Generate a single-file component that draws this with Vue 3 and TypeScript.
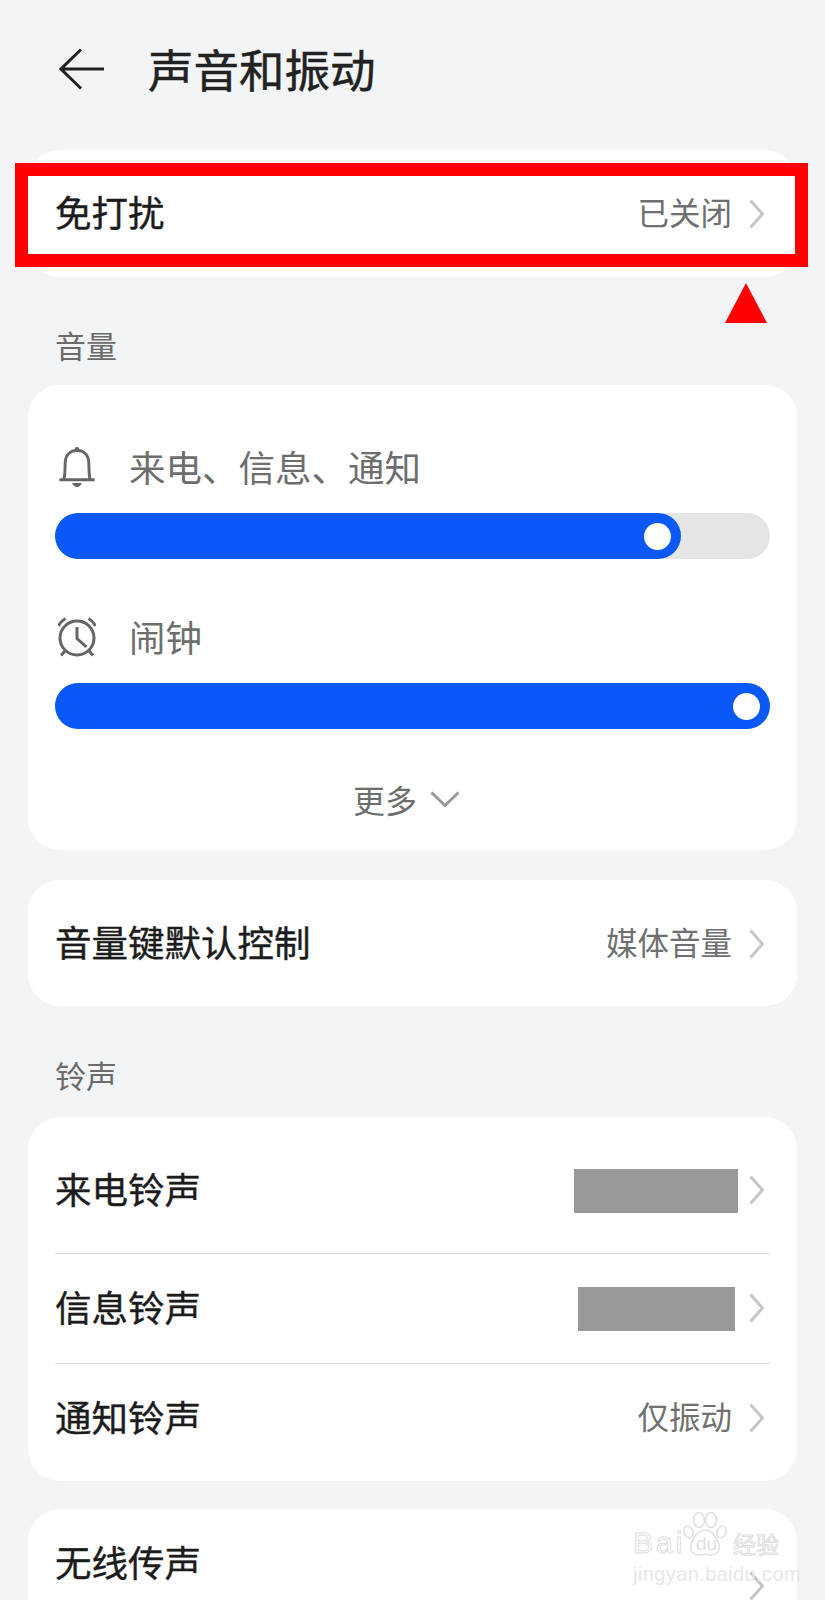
<script setup lang="ts">
interface RingRow {
  name: string
  value?: string
  maskWidth?: number
  maskHeight?: number
  maskShift?: number
}

const ringRows: RingRow[] = [
  { name: '来电铃声', maskWidth: 164, maskHeight: 44, maskShift: -6 },
  { name: '信息铃声', maskWidth: 157, maskHeight: 44, maskShift: -3 },
  { name: '通知铃声', value: '仅振动' },
]

function maskStyle(row: RingRow) {
  return {
    width: `${row.maskWidth}px`,
    height: `${row.maskHeight}px`,
    marginRight: `${row.maskShift}px`,
  }
}
</script>

<template>
  <div class="page">
    <header class="header">
      <svg class="back" viewBox="0 0 46 42" fill="none">
        <path d="M22 1.500 2 21l20 19.500M2 21h43" />
      </svg>
      <h1 class="title">声音和振动</h1>
    </header>

    <section class="card">
      <div class="row row-single">
        <span class="name">免打扰</span>
        <span class="value">已关闭</span>
        <svg class="chevron" viewBox="0 0 15 30" fill="none"><path d="M1.500 1.500 13.500 15 1.500 28.500" /></svg>
      </div>
    </section>

    <div class="section-label label-volume">音量</div>

    <section class="card volume">
      <div class="vol-head">
        <svg class="vol-icon" viewBox="0 0 38 41" fill="none">
          <path d="M1 33.500h36M5.500 33.500C7 29 6.500 21 7 15 7.500 8 12 3.500 19 3.500S30.500 8 31 15c.5 6 0 14 1.500 18.500" />
          <circle class="solid" cx="19" cy="2.500" r="2.500" />
          <path class="solid" d="M14 37h10c-1 3-3 4-5 4s-4-1-5-4Z" />
        </svg>
        <span class="vol-name">来电、信息、通知</span>
      </div>
      <div class="slider">
        <div class="fill fill-ring">
          <span class="thumb" />
        </div>
      </div>

      <div class="vol-head vol-head-next">
        <svg class="vol-icon" viewBox="0 0 38 38" fill="none">
          <circle cx="19" cy="20" r="17" />
          <path d="M19 9v11.500L28.500 29M.5 8C2 5 4 2.500 7.500.5M37.500 8C36 5 34 2.500 30.500.5M7 33 3 37.500M31 33l4 4.500" />
        </svg>
        <span class="vol-name">闹钟</span>
      </div>
      <div class="slider">
        <div class="fill fill-full">
          <span class="thumb" />
        </div>
      </div>

      <div class="more">
        <span>更多</span>
        <svg class="more-arrow" viewBox="0 0 30 16" fill="none"><path d="M1.500 1.500 15 14.500 28.500 1.500" /></svg>
      </div>
    </section>

    <section class="card card-key">
      <div class="row row-single">
        <span class="name">音量键默认控制</span>
        <span class="value">媒体音量</span>
        <svg class="chevron" viewBox="0 0 15 30" fill="none"><path d="M1.500 1.500 13.500 15 1.500 28.500" /></svg>
      </div>
    </section>

    <div class="section-label label-ring">铃声</div>

    <section class="card rings">
      <div v-for="row in ringRows" :key="row.name" class="row ring-row">
        <span class="name">{{ row.name }}</span>
        <span v-if="row.value" class="value">{{ row.value }}</span>
        <span v-else class="mask" :style="maskStyle(row)" />
        <svg class="chevron" viewBox="0 0 15 30" fill="none"><path d="M1.500 1.500 13.500 15 1.500 28.500" /></svg>
      </div>
    </section>

    <section class="card wireless">
      <div class="row wireless-row">
        <span class="name">无线传声</span>
        <svg class="chevron chevron-low" viewBox="0 0 15 30" fill="none"><path d="M1.500 1.500 13.500 15 1.500 28.500" /></svg>
      </div>
    </section>

    <!-- annotation drawn on top of the screenshot -->
    <div class="red-box" />
    <div class="red-arrow" />

    <div class="watermark">
      <div class="wm-top">
        <span class="wm-bai">Bai</span>
        <svg class="wm-paw" viewBox="0 0 44 44" fill="none">
          <ellipse cx="16" cy="8" rx="5.500" ry="7.500" />
          <ellipse cx="28" cy="8" rx="5.500" ry="7.500" />
          <ellipse cx="5.500" cy="20" rx="4.500" ry="6" transform="rotate(-25 5.500 20)" />
          <ellipse cx="38.500" cy="20" rx="4.500" ry="6" transform="rotate(25 38.500 20)" />
          <path d="M22 18c7 0 12 8 14 14 2 8-4 11-8 11-3 0-4-1-6-1s-3 1-6 1c-4 0-10-3-8-11 2-6 7-14 14-14Z" />
        </svg>
        <span class="wm-du">du</span>
        <span class="wm-cn">经验</span>
      </div>
      <div class="wm-url">jingyan.baidu.com</div>
    </div>
  </div>
</template>

<style>
body {
  background: #f3f4f6;
}
</style>

<style scoped>
.page {
  position: relative;
  width: 825px;
  height: 1600px;
  padding: 0 28px;
  box-sizing: border-box;
  overflow: hidden;
  background: #f3f4f6;
  font-family: "Liberation Sans", "Noto Sans CJK SC", sans-serif;
  color: #1c1c1c;
}
.header {
  display: flex;
  align-items: center;
  height: 150px;
  padding: 0 0 4px 31px;
  box-sizing: border-box;
}
.back {
  width: 46px;
  height: 42px;
  margin: 0 43px 8px 0;
}
.back path {
  stroke: #222;
  stroke-width: 3;
}
.title {
  margin: 0;
  font-size: 45.500px;
  line-height: 60px;
  font-weight: 400;
  color: #222;
  -webkit-text-stroke: 0.500px #222;
}
.card {
  background: #fff;
  border-radius: 32px;
}
.row {
  display: flex;
  align-items: center;
  padding: 0 33px 0 27px;
}
.row-single {
  height: 127px;
}
.name {
  flex: 1;
  margin-top: 3px;
  font-size: 36.500px;
  line-height: 44px;
  font-weight: 400;
  -webkit-text-stroke: 0.400px #1c1c1c;
}
.value {
  font-size: 31.500px;
  line-height: 44px;
  color: #707070;
}
.chevron {
  width: 15px;
  height: 30px;
  margin-left: 17px;
  flex: none;
}
.chevron path {
  stroke: #c6c6c6;
  stroke-width: 3;
}
.section-label {
  height: 40px;
  padding-left: 27px;
  font-size: 31px;
  line-height: 40px;
  color: #6b6b6b;
}
.label-volume {
  margin: 51px 0 17px;
}
.label-ring {
  margin: 52px 0 19px;
}
.volume {
  height: 465px;
  padding: 62px 27px 0;
  box-sizing: border-box;
}
.vol-head {
  display: flex;
  align-items: center;
  height: 40px;
  margin-bottom: 26px;
}
.vol-head-next {
  margin-top: 58px;
}
.vol-icon {
  width: 38px;
  height: 40px;
  margin: 0 33px 0 3px;
  flex: none;
}
.vol-icon path,
.vol-icon circle {
  stroke: #666;
  stroke-width: 3;
}
.vol-icon .solid {
  stroke: none;
  fill: #666;
}
.vol-name {
  margin-top: 5px;
  font-size: 36.500px;
  line-height: 44px;
  color: #6e6e6e;
}
.slider {
  height: 46px;
  border-radius: 23px;
  background: #e5e5e5;
}
.fill {
  display: flex;
  align-items: center;
  justify-content: flex-end;
  height: 100%;
  padding-right: 10px;
  box-sizing: border-box;
  border-radius: 23px;
  background: #0a59f7;
}
.fill-ring {
  width: 626px;
}
.fill-full {
  width: 100%;
}
.thumb {
  width: 27px;
  height: 27px;
  border-radius: 50%;
  background: #fff;
}
.more {
  display: flex;
  align-items: center;
  justify-content: center;
  gap: 13px;
  height: 40px;
  margin: 50px 0 0 -12px;
  font-size: 32px;
  color: #6e6e6e;
}
.more-arrow {
  width: 30px;
  height: 16px;
}
.more-arrow path {
  stroke: #9a9a9a;
  stroke-width: 3;
}
.card-key {
  margin-top: 30px;
  height: 126px;
}
.rings {
  padding: 10px 0 8px;
}
.ring-row {
  position: relative;
  height: 110px;
}
.ring-row:first-child {
  height: 126px;
}
.ring-row .name {
  margin-top: 4px;
}
.ring-row + .ring-row::before {
  content: "";
  position: absolute;
  top: 0;
  left: 27px;
  right: 27px;
  height: 1px;
  background: #d9d9d9;
}
.mask {
  margin-top: 2px;
  background: #999;
  flex: none;
}
.wireless {
  margin-top: 28px;
  height: 140px;
}
.wireless-row {
  align-items: flex-start;
  padding-top: 31px;
}
.wireless-row .name {
  margin-top: 3px;
}
.chevron-low {
  margin-top: 31px;
}
.red-box {
  position: absolute;
  left: 15px;
  top: 163px;
  width: 793px;
  height: 104px;
  box-sizing: border-box;
  border: 13px solid #fe0000;
}
.red-arrow {
  position: absolute;
  left: 725px;
  top: 283px;
  width: 0;
  height: 0;
  border-left: 21.500px solid transparent;
  border-right: 21.500px solid transparent;
  border-bottom: 40px solid #fe0000;
}
.watermark {
  position: absolute;
  left: 633px;
  top: 1512px;
  width: 150px;
  color: #fff;
}
.wm-top {
  position: relative;
  display: flex;
  align-items: flex-end;
  height: 44px;
  font-family: "Liberation Sans", sans-serif;
}
.wm-bai {
  width: 50px;
  font-size: 30px;
  line-height: 26px;
  letter-spacing: 3px;
  color: #fff;
  -webkit-text-stroke: 1px #e0e0e0;
}
.wm-paw {
  width: 44px;
  height: 44px;
}
.wm-paw ellipse,
.wm-paw path {
  stroke: #e0e0e0;
  stroke-width: 1.500;
  fill: #fff;
}
.wm-du {
  position: absolute;
  left: 63px;
  bottom: 2px;
  font-size: 19px;
  line-height: 20px;
  color: #e0e0e0;
}
.wm-cn {
  margin-left: 6px;
  font-family: "Noto Sans CJK SC", sans-serif;
  font-size: 23px;
  line-height: 26px;
  color: #fff;
  -webkit-text-stroke: 1px #e0e0e0;
}
.wm-url {
  margin-top: 7px;
  font-size: 20px;
  line-height: 22px;
  letter-spacing: 0.400px;
  color: #e8e8e8;
  white-space: nowrap;
}
</style>
